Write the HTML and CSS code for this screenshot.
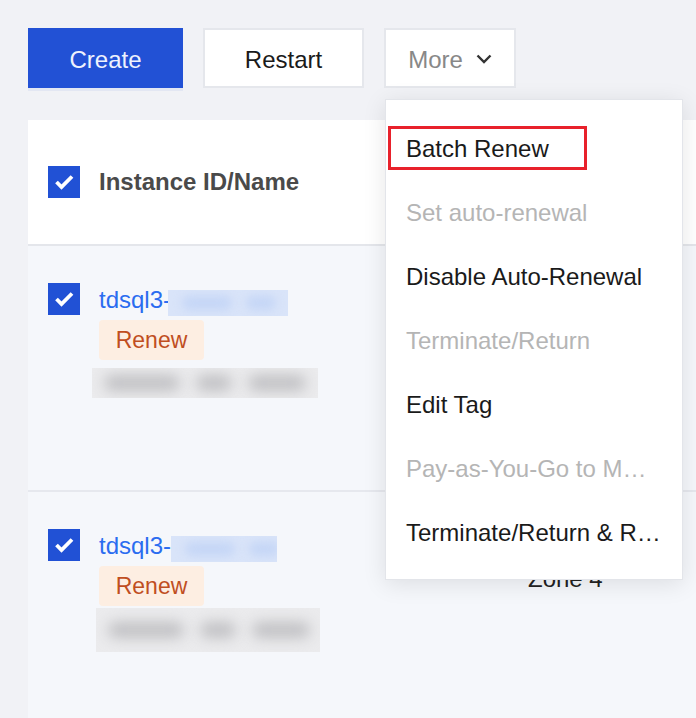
FILE: index.html
```html
<!DOCTYPE html>
<html lang="en">
<head>
<meta charset="utf-8">
<title>Instances</title>
<link rel="stylesheet" href="styles.css">
</head>
<body>
<div class="page">
  <div class="toolbar">
    <button class="btn btn-primary">Create</button>
    <button class="btn btn-restart">Restart</button>
    <div class="dropdown">
      <button class="btn btn-more">More
        <svg class="chevron" width="16" height="10" viewBox="0 0 16 10"><path d="M1.5 1.5 L8 8 L14.5 1.5" fill="none" stroke="#333" stroke-width="2.4"/></svg>
      </button>
      <ul class="menu">
        <li><span class="highlight">Batch Renew</span></li>
        <li class="disabled">Set auto-renewal</li>
        <li>Disable Auto-Renewal</li>
        <li class="disabled">Terminate/Return</li>
        <li>Edit Tag</li>
        <li class="disabled">Pay-as-You-Go to M…</li>
        <li>Terminate/Return &amp; R…</li>
      </ul>
    </div>
  </div>

  <div class="table">
    <div class="thead">
      <span class="cb"><svg width="32" height="32" viewBox="0 0 32 32"><path d="M8.5 16 L13.5 21 L24 10.5" fill="none" stroke="#fff" stroke-width="3.8"/></svg></span>
      <span class="th">Instance ID/Name</span>
    </div>

    <div class="row">
      <span class="cb"><svg width="32" height="32" viewBox="0 0 32 32"><path d="M8.5 16 L13.5 21 L24 10.5" fill="none" stroke="#fff" stroke-width="3.8"/></svg></span>
      <div class="name-cell">
        <div class="link-line"><span class="link">tdsql3-</span><span class="blur-blue r1"><i class="bb w1"></i><i class="bb w2"></i></span></div>
        <span class="tag">Renew</span>
        <div class="blur-gray r1"><i class="blob b1"></i><i class="blob b2"></i><i class="blob b3"></i></div>
      </div>
      <div class="zone-cell"></div>
    </div>

    <div class="row">
      <span class="cb"><svg width="32" height="32" viewBox="0 0 32 32"><path d="M8.5 16 L13.5 21 L24 10.5" fill="none" stroke="#fff" stroke-width="3.8"/></svg></span>
      <div class="name-cell">
        <div class="link-line"><span class="link">tdsql3-</span><span class="blur-blue r2"><i class="bb w1"></i><i class="bb w2"></i></span></div>
        <span class="tag">Renew</span>
        <div class="blur-gray r2"><i class="blob b1"></i><i class="blob b2"></i><i class="blob b3"></i></div>
      </div>
      <div class="zone-cell">Zone 4</div>
    </div>
  </div>
</div>
</body>
</html>
```

FILE: styles.css
```css
html, body {
  margin: 0;
  padding: 0;
}
body {
  background: #f1f2f6;
  font-family: "Liberation Sans", Arial, Helvetica, sans-serif;
  font-size: 24px;
  color: #1a1a1a;
  width: 696px;
  height: 718px;
  overflow: hidden;
}
.page {
  padding: 28px 0 0 28px;
}
.toolbar {
  display: flex;
  gap: 20px;
  height: 60px;
}
.btn {
  height: 60px;
  box-sizing: border-box;
  font-family: inherit;
  font-size: 24px;
  border: 2px solid #e5e7ec;
  background: #fff;
  color: #1a1a1a;
  padding: 3px 0 0;
  margin: 0;
  display: flex;
  align-items: center;
  justify-content: center;
}
.btn-primary {
  width: 155px;
  background: #2251d5;
  border-color: #2251d5;
  color: #eef2fd;
  box-shadow: 0 3px 0 #e3e7f3;
}
.btn-restart {
  width: 161px;
}
.dropdown {
  position: relative;
}
.btn-more {
  width: 132px;
  color: #888;
  gap: 13px;
}
.chevron {
  margin-top: -1px;
}
.menu {
  position: absolute;
  left: 1px;
  top: 71px;
  width: 298px;
  box-sizing: border-box;
  border: 1px solid #e3e5ea;
  background: #fff;
  padding: 16px 0 15px;
  margin: 0;
  list-style: none;
  box-shadow: 0 4px 22px rgba(0, 0, 0, 0.10);
  z-index: 2;
}
.menu li {
  height: 64px;
  box-sizing: border-box;
  padding-top: 2px;
  display: flex;
  align-items: center;
  padding-left: 20px;
  white-space: nowrap;
  color: #1a1a1a;
}
.menu li:first-child {
  padding-top: 0;
}
.menu li.disabled {
  color: #b5b5b5;
}
.highlight {
  box-sizing: border-box;
  width: 199px;
  height: 44px;
  margin-left: -18px;
  padding: 2px 0 0 15px;
  border: 3px solid #e8212b;
  display: flex;
  align-items: center;
}

.table {
  margin-top: 32px;
  background: #f5f7fb;
  height: 600px;
}
.thead {
  height: 124px;
  background: #fff;
  border-bottom: 2px solid #e4e6eb;
  display: flex;
  align-items: center;
  padding-left: 20px;
  gap: 19px;
}
.th {
  font-weight: bold;
  color: #4a4a4a;
}
.cb {
  width: 32px;
  height: 32px;
  background: #2151d5;
  flex: none;
  display: block;
}
.cb svg {
  display: block;
}
.row {
  height: 244px;
  display: flex;
  align-items: flex-start;
  padding-left: 20px;
  border-bottom: 2px solid #e6e8ee;
}
.row .cb {
  margin-top: 37px;
}
.name-cell {
  width: 429px;
  flex: none;
  margin-left: 19px;
  padding-top: 40px;
  display: flex;
  flex-direction: column;
  align-items: flex-start;
}
.link-line {
  display: flex;
  align-items: flex-start;
  line-height: 28px;
  color: #2a6cf0;
  white-space: nowrap;
}
.blur-blue {
  box-sizing: border-box;
  height: 26px;
  margin-top: 4px;
  background: #d9e4f9;
  display: flex;
  align-items: center;
  gap: 14px;
  padding-left: 14px;
  overflow: hidden;
}
.blur-blue.r1 {
  width: 120px;
  margin-left: -3px;
}
.blur-blue.r2 {
  width: 106px;
}
.bb {
  height: 14px;
  background: #c5d6f6;
  border-radius: 7px;
  filter: blur(5px);
  flex: none;
}
.bb.w1 {
  width: 50px;
}
.bb.w2 {
  width: 30px;
}
.tag {
  margin-top: 4px;
  height: 40px;
  box-sizing: border-box;
  width: 105px;
  justify-content: center;
  background: #fdeee2;
  color: #c04e1f;
  border-radius: 4px;
  font-size: 23px;
  display: flex;
  align-items: center;
}
.blur-gray {
  box-sizing: border-box;
  display: flex;
  align-items: center;
  gap: 16px;
  padding-left: 12px;
  background: #ebebed;
  overflow: hidden;
}
.blur-gray.r1 {
  margin-top: 8px;
  margin-left: -7px;
  width: 226px;
  height: 30px;
}
.blur-gray.r2 {
  margin-top: 2px;
  margin-left: -3px;
  width: 224px;
  height: 44px;
}
.blob {
  height: 16px;
  background: #c0c0c3;
  border-radius: 8px;
  filter: blur(7px);
  flex: none;
}
.blob.b1 {
  width: 76px;
}
.blob.b2 {
  width: 36px;
}
.blob.b3 {
  width: 58px;
}
.zone-cell {
  padding-top: 73px;
  line-height: 28px;
  color: #222;
  white-space: nowrap;
}
```
